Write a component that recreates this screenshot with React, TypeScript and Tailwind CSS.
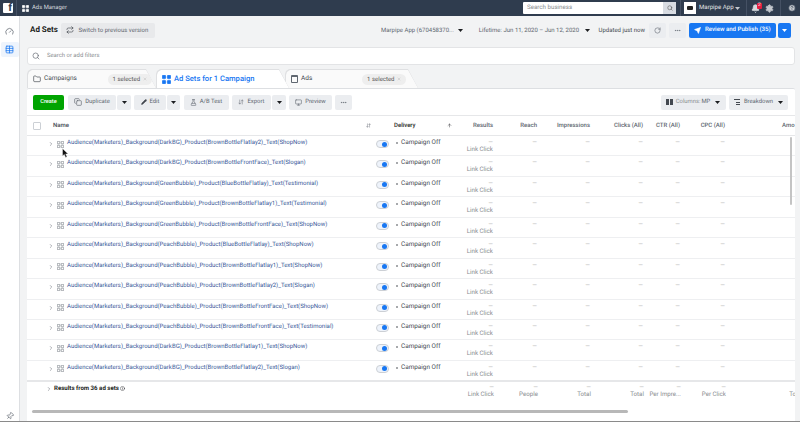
import React from "react";
import { Search, Repeat, Folder, Copy, Pencil, FlaskConical, Monitor, MoreHorizontal, ChevronRight, Pin, Send, Bell, Settings, HelpCircle, Gauge, Table, X, RotateCw, ArrowDownUp, ArrowUp, Info } from "lucide-react";

const names = [
  "Audience(Marketers)_Background(DarkBG)_Product(BrownBottleFlatlay2)_Text(ShopNow)",
  "Audience(Marketers)_Background(DarkBG)_Product(BrownBottleFrontFace)_Text(Slogan)",
  "Audience(Marketers)_Background(GreenBubble)_Product(BlueBottleFlatlay)_Text(Testimonial)",
  "Audience(Marketers)_Background(GreenBubble)_Product(BrownBottleFlatlay1)_Text(Testimonial)",
  "Audience(Marketers)_Background(GreenBubble)_Product(BrownBottleFrontFace)_Text(ShopNow)",
  "Audience(Marketers)_Background(PeachBubble)_Product(BlueBottleFlatlay)_Text(ShopNow)",
  "Audience(Marketers)_Background(PeachBubble)_Product(BrownBottleFlatlay1)_Text(ShopNow)",
  "Audience(Marketers)_Background(PeachBubble)_Product(BrownBottleFlatlay2)_Text(Slogan)",
  "Audience(Marketers)_Background(PeachBubble)_Product(BrownBottleFrontFace)_Text(ShopNow)",
  "Audience(Marketers)_Background(PeachBubble)_Product(BrownBottleFrontFace)_Text(Testimonial)",
  "Audience(Marketers)_Background(DarkBG)_Product(BrownBottleFlatlay1)_Text(ShopNow)",
  "Audience(Marketers)_Background(DarkBG)_Product(BrownBottleFlatlay2)_Text(Slogan)",
];

const Caret = ({ className = "" }: { className?: string }) => (
  <svg width="5" height="3" viewBox="0 0 7 4" className={`shrink-0 ${className}`}><path d="M0 0h7L3.5 4z" fill="currentColor" /></svg>
);

const Grid4 = ({ size = 10, className = "", solid = false }: { size?: number; className?: string; solid?: boolean }) => (
  <svg width={size} height={size} viewBox="0 0 10 10" className={`shrink-0 ${className}`}>
    {[[0, 0], [5.6, 0], [0, 5.6], [5.6, 5.6]].map(([x, y], i) => (
      <rect key={i} x={x + 0.4} y={y + 0.4} width="3.6" height="3.6" rx="0.7" fill={solid ? "currentColor" : "none"} stroke="currentColor" strokeWidth="0.8" />
    ))}
  </svg>
);

const Btn = ({ children, className = "" }: { children: React.ReactNode; className?: string }) => (
  <div className={`flex h-[15px] shrink-0 items-center justify-center rounded-[2px] bg-[#ebedf0] text-[#606770] ${className}`}>{children}</div>
);

const Selected = () => (
  <div className="flex h-[11px] w-[44px] items-center justify-center gap-[3px] rounded-full bg-[#eeeeee] text-[6px] text-[#555]">
    1 selected <X size={4} className="text-[#aaa]" />
  </div>
);

const Tab = ({ children, className = "", inner = "" }: { children: React.ReactNode; className?: string; inner?: string }) => (
  <div className={`h-[19px] shrink-0 bg-[#dfe0e2] pl-px pt-px [clip-path:polygon(0_5px,1px_2px,4px_0,calc(100%_-_10px)_0,100%_100%,0_100%)] ${className}`}>
    <div className={`flex h-[18px] w-full items-center pl-[5px] [clip-path:polygon(0_5px,1px_2px,4px_0,calc(100%_-_10px)_0,100%_100%,0_100%)] ${inner}`}>{children}</div>
  </div>
);

const nums = "shrink-0 text-right";

const Dash = ({ w, sub }: { w: string; sub?: string }) => (
  <div className={`${nums} ${w} whitespace-nowrap text-[6px] leading-[7px] text-[#aaa]`}>
    <div>—</div>
    {sub && <div className="text-[6.2px] text-[#8a8d91]">{sub}</div>}
  </div>
);

export default function App() {
  return (
    <div className="relative flex h-[422px] w-[800px] flex-col overflow-hidden bg-[#f2f3f4] text-[6px] text-[#444950] [text-rendering:geometricPrecision]" style={{ fontFamily: "Roboto, 'Liberation Sans', sans-serif" }}>
      {/* top bar */}
      <header className="flex h-[16px] shrink-0 items-center bg-[#2f3c4e] text-white">
        <div className="ml-[3px] flex h-[10px] w-[10px] items-end justify-end rounded-[1px] bg-white">
          <span className="mr-[1px] text-[11px] font-bold leading-[10px] text-[#2f3c4e]" style={{ fontFamily: "'Liberation Sans', sans-serif" }}>f</span>
        </div>
        <div className="ml-[3px] h-[16px] w-px bg-[#455164]" />
        <Grid4 size={7} solid className="ml-[5px] text-white" />
        <span className="ml-[3px] text-[5.9px] text-[#d5d9de]">Ads Manager</span>
        <div className="ml-auto flex h-[12px] w-[153px] items-center justify-between rounded-[1px] bg-white pl-[4px] text-[6.2px] text-[#8a8d91]">
          Search business
          <div className="flex h-full w-[13px] items-center justify-center bg-[#d8dce2]"><Search size={6} className="text-[#444]" /></div>
        </div>
        <div className="ml-[4px] mr-[3px] h-[16px] w-px bg-[#455164]" />
        <div className="flex h-[12px] w-[12px] items-center justify-center bg-white"><div className="h-[4px] w-[6px] rounded-[1px] bg-[#222]" /></div>
        <span className="ml-[3px] w-[33px] whitespace-nowrap text-[6.1px] text-[#e4e6e9]">Marpipe App</span>
        <Caret className="ml-[3px] text-[#c5c9cf]" />
        <div className="ml-[6px] h-[16px] w-px bg-[#455164]" />
        <div className="relative ml-[4px]">
          <Bell size={9} fill="#d5d9de" className="text-[#d5d9de]" />
          <span className="absolute -right-[2px] -top-[1px] flex h-[6px] w-[5px] items-center justify-center rounded-[1px] bg-[#e41e3f] text-[5px] text-white">2</span>
        </div>
        <Settings size={9} fill="#c5c9cf" className="ml-[4.5px] text-[#c5c9cf]" />
        <div className="ml-[6.5px] h-[16px] w-px bg-[#455164]" />
        <HelpCircle size={8} fill="#c5c9cf" className="ml-[7px] mr-[4px] text-[#2f3c4e]" />
      </header>

      <div className="flex min-h-0 flex-1">
        {/* sidebar */}
        <aside className="flex w-[20px] shrink-0 flex-col items-center border-r border-[#dddfe2] bg-white pt-[11px] text-[#606770]">
          <Gauge size={9} />
          <div className="mt-[6px] flex h-[15px] w-[18px] items-center justify-center rounded-[2px] bg-[#eef4fc]">
            <Table size={9} className="text-[#1877f2]" />
          </div>
          <Pin size={8} className="mt-auto mb-[1px] rotate-45 text-[#606770]" />
        </aside>

        {/* content */}
        <main className="flex min-w-0 flex-1 flex-col pl-[6px] pr-[5px]">
          {/* title row */}
          <div className="flex h-[31px] shrink-0 items-center pb-[5px] pr-[4px] pt-[2px]">
            <span className="ml-[4px] text-[8px] font-bold text-[#1c1e21]">Ad Sets</span>
            <div className="ml-[3.5px] flex h-[15px] w-[94px] items-center rounded-[2px] bg-[#e8e9eb] pl-[5px] text-[6px] text-[#606770]">
              <Repeat size={8} className="text-[#444950]" />
              <span className="ml-[4px] whitespace-nowrap">Switch to previous version</span>
            </div>
            <span className="ml-auto whitespace-nowrap text-[6px] text-[#606770]">Marpipe App (670458370...</span>
            <Caret className="ml-[4.5px] text-[#1c1e21]" />
            <span className="ml-[15.5px] whitespace-nowrap text-[6px] text-[#606770]">Lifetime: Jun 11, 2020 – Jun 12, 2020</span>
            <Caret className="ml-[5.5px] text-[#1c1e21]" />
            <span className="ml-[9px] whitespace-nowrap text-[6px] text-[#444950]">Updated just now</span>
            <Btn className="ml-[4px] w-[16.5px]"><RotateCw size={7} /></Btn>
            <Btn className="ml-[3.5px] w-[17px]"><MoreHorizontal size={7} /></Btn>
            <div className="ml-[3px] flex h-[15px] w-[87px] shrink-0 items-center rounded-[2px] bg-[#1877f2] pl-[5px] text-[6.1px] font-medium text-white">
              <Send size={7} fill="white" />
              <span className="ml-[4px] whitespace-nowrap">Review and Publish (35)</span>
            </div>
            <div className="ml-[2px] flex h-[15px] w-[13px] shrink-0 items-center justify-center rounded-[2px] bg-[#1877f2] text-white"><Caret /></div>
          </div>

          {/* search */}
          <div className="ml-px flex h-[18px] shrink-0 items-center rounded-[3px] border border-[#e3e4e6] bg-white pl-[4px] text-[5.9px] text-[#8a8d91]">
            <Search size={8} className="text-[#606770]" />
            <span className="ml-[7px]">Search or add filters</span>
          </div>

          {/* tabs */}
          <div className="mt-[4px] ml-px flex h-[19px] shrink-0 items-end">
            <Tab className="w-[129px]" inner="bg-[#fafafa] text-[6.5px]">
              <Folder size={8} className="text-[#444950]" />
              <span className="ml-[3px]">Campaigns</span>
              <div className="ml-[31px]"><Selected /></div>
            </Tab>
            <Tab className="relative z-10 w-[133px]" inner="bg-white text-[7.6px] font-medium text-[#1877f2]">
              <Grid4 size={9} solid className="text-[#1877f2]" />
              <span className="ml-[3px] whitespace-nowrap">Ad Sets for 1 Campaign</span>
            </Tab>
            <Tab className="ml-[-4px] w-[133px]" inner="bg-[#fafafa] text-[6.5px]">
              <div className="h-[8px] w-[7px] rounded-[1px] border border-t-2 border-[#606770]" />
              <span className="ml-[3px]">Ads</span>
              <div className="ml-[50px]"><Selected /></div>
            </Tab>
          </div>

          {/* table card */}
          <section className="ml-px flex min-h-0 flex-1 flex-col overflow-hidden rounded-t-[2px] border-t border-[#dddfe2] bg-white">
            {/* toolbar */}
            <div className="flex h-[26px] shrink-0 items-center pl-[6px] pr-[7px] text-[5.9px]">
              <div className="flex h-[15px] w-[31px] shrink-0 items-center justify-center rounded-[2px] bg-[#00a400] text-[5.6px] font-medium text-white">Create</div>
              <div className="ml-[4px] flex">
                <Btn className="w-[48px]"><Copy size={8} /><span className="ml-[3px]">Duplicate</span></Btn>
                <Btn className="ml-px w-[14px]"><Caret className="text-[#1c1e21]" /></Btn>
              </div>
              <div className="ml-[3px] flex">
                <Btn className="w-[32px]"><Pencil size={6} fill="#444950" className="text-[#444950]" /><span className="ml-[3px]">Edit</span></Btn>
                <Btn className="ml-px w-[13px]"><Caret className="text-[#1c1e21]" /></Btn>
              </div>
              <Btn className="ml-[3.5px] w-[45px]"><FlaskConical size={7} /><span className="ml-[3px]">A/B Test</span></Btn>
              <div className="ml-[3.5px] flex">
                <Btn className="w-[39px]"><ArrowDownUp size={6} /><span className="ml-[3px]">Export</span></Btn>
                <Btn className="ml-px w-[14px]"><Caret className="text-[#1c1e21]" /></Btn>
              </div>
              <Btn className="ml-[3px] w-[43px]"><Monitor size={7} /><span className="ml-[3px]">Preview</span></Btn>
              <Btn className="ml-[3px] w-[17px]"><MoreHorizontal size={7} /></Btn>
              <Btn className="ml-auto w-[65px]">
                <div className="h-[6px] w-[7px] border-x-2 border-[#444950] bg-[linear-gradient(90deg,#444950_40%,transparent_40%,transparent_60%,#444950_60%)]" />
                <span className="ml-[3px] text-[#8a8d91]">Columns:</span><span className="ml-[1px]">MP</span>
                <Caret className="ml-[5px] text-[#1c1e21]" />
              </Btn>
              <Btn className="ml-[3.5px] w-[59px]">
                <div className="flex h-[6px] w-[6px] flex-col items-end justify-between"><i className="h-px w-[6px] bg-[#444950]" /><i className="h-px w-[4px] bg-[#444950]" /><i className="h-px w-[4px] bg-[#444950]" /></div>
                <span className="ml-[4px]">Breakdown</span>
                <Caret className="ml-[5px] text-[#1c1e21]" />
              </Btn>
            </div>

            {/* header */}
            <div className="flex h-[21px] shrink-0 items-center border-y border-[#e6e7e9] pl-[6px] text-[6px] font-medium text-[#606770]">
              <div className="h-[8px] w-[8px] shrink-0 rounded-[1px] border border-[#ccd0d5]" />
              <span className="ml-[12px] w-[313px] shrink-0 text-[#444950]">Name</span>
              <ArrowDownUp size={5} className="shrink-0 text-[#606770]" />
              <span className="ml-[23px] w-[53px] shrink-0 text-[#1c1e21]">Delivery</span>
              <ArrowUp size={5} className="shrink-0 text-[#1c1e21]" />
              <span className={`${nums} w-[41px]`}>Results</span>
              <span className={`${nums} w-[44px]`}>Reach</span>
              <span className={`${nums} w-[53px]`}>Impressions</span>
              <span className={`${nums} w-[53px]`}>Clicks (All)</span>
              <span className={`${nums} w-[37px]`}>CTR (All)</span>
              <span className={`${nums} w-[45px]`}>CPC (All)</span>
              <span className="ml-[57px] shrink-0">Amo</span>
            </div>

            {/* rows */}
            <div className="relative min-h-0 flex-1 overflow-hidden">
              {names.map((n) => (
                <div key={n} className="flex h-[20.45px] items-start border-b border-[#eeeff1] pl-[21px] pt-[3px]">
                  <ChevronRight size={6} className="mt-[2px] shrink-0 text-[#606770]" />
                  <Grid4 size={7} className="ml-[3px] mt-[1.5px] text-[#606770]" />
                  <a className="ml-[3px] w-[309px] shrink-0 whitespace-nowrap text-[6px] leading-[7px] text-[#385898]">{n}</a>
                  <div className="mt-[1px] flex h-[8px] w-[13px] shrink-0 items-center justify-end rounded-full border border-[#ccd0d5] bg-[#eef3fb] pr-[1.5px]">
                    <div className="h-[5px] w-[5px] rounded-full bg-[#1877f2]" />
                  </div>
                  <div className="ml-[6.5px] mt-[3px] h-[2px] w-[2px] shrink-0 rounded-full bg-[#8a8d91]" />
                  <span className="ml-[3.5px] w-[51px] shrink-0 whitespace-nowrap text-[6.4px] leading-[7px] text-[#444950]">Campaign Off</span>
                  <Dash w="w-[41px]" sub="Link Click" />
                  <Dash w="w-[44px]" />
                  <Dash w="w-[53px]" />
                  <Dash w="w-[53px]" />
                  <Dash w="w-[37px]" />
                  <Dash w="w-[45px]" />
                </div>
              ))}
              <div className="absolute right-[3px] top-[1px] h-[68px] w-[2px] rounded-full bg-[#c4c4c4]" />
            </div>

            {/* totals */}
            <div className="flex h-[27px] shrink-0 items-start border-t-2 border-[#e6e7e9] pl-[19px] pt-[2px]">
              <ChevronRight size={6} className="mt-[2px] shrink-0 text-[#606770]" />
              <span className="ml-[2px] w-[398px] shrink-0 whitespace-nowrap text-[6.1px] font-bold leading-[9px] text-[#1c1e21]">
                Results from 36 ad sets <Info size={5} className="inline align-[-0.5px]" />
              </span>
              <Dash w="w-[42px]" sub="Link Click" />
              <Dash w="w-[44px]" sub="People" />
              <Dash w="w-[53px]" sub="Total" />
              <Dash w="w-[53px]" sub="Total" />
              <Dash w="w-[37px]" sub="Per Impre..." />
              <Dash w="w-[45px]" sub="Per Click" />
              <Dash w="w-[77px]" sub="Total" />
            </div>

            {/* horizontal scrollbar */}
            <div className="h-[14px] shrink-0 pl-[5px] pt-[3px]">
              <div className="h-[3px] w-[596px] rounded-full bg-[#b8b8b8]" />
            </div>
          </section>
        </main>
      </div>
      <div className="h-px shrink-0 bg-[#8a8a8a]" />

      {/* cursor */}
      <svg className="absolute left-[62px] top-[148px]" width="7" height="10" viewBox="0 0 7 10">
        <path d="M0.5 0.5v7.5l1.8-1.6 1.3 3 1.4-.6-1.3-2.9h2.4z" fill="#111" stroke="#fff" strokeWidth="0.4" />
      </svg>
    </div>
  );
}
